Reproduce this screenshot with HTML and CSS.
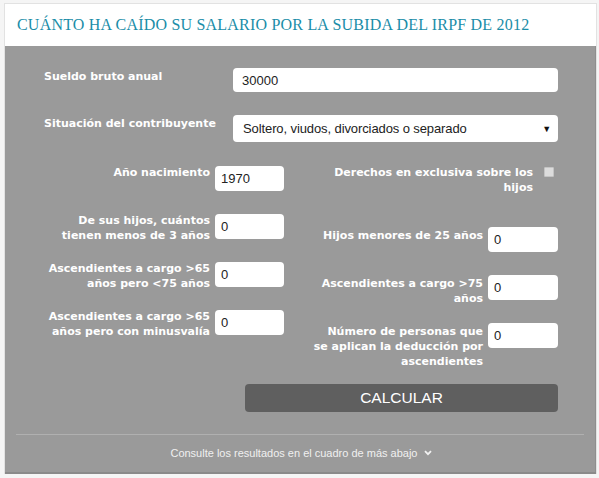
FILE: index.html
```html
<!DOCTYPE html>
<html lang="es">
<head>
<meta charset="utf-8">
<title>Calculadora IRPF 2012</title>
<link rel="stylesheet" href="styles.css">
</head>
<body>
<div class="widget">
  <div class="header">
    <h1 class="title">CUÁNTO HA CAÍDO SU SALARIO POR LA SUBIDA DEL IRPF DE 2012</h1>
  </div>
  <form class="panel">
    <div class="full-row">
      <label class="label full-label">Sueldo bruto anual</label>
      <input class="field field-wide" type="text" value="30000">
    </div>
    <div class="full-row">
      <label class="label full-label">Situación del contribuyente</label>
      <div class="select">
        <span class="select-text">Soltero, viudos, divorciados o separado</span>
        <span class="select-arrow">▼</span>
      </div>
    </div>
    <div class="columns">
      <div class="col col-left">
        <div class="row">
          <label class="label side-label">Año nacimiento</label>
          <input class="field field-small" type="text" value="1970">
        </div>
        <div class="row">
          <label class="label side-label">De sus hijos, cuántos tienen menos de 3 años</label>
          <input class="field field-small" type="text" value="0">
        </div>
        <div class="row">
          <label class="label side-label">Ascendientes a cargo &gt;65 años pero &lt;75 años</label>
          <input class="field field-small" type="text" value="0">
        </div>
        <div class="row">
          <label class="label side-label">Ascendientes a cargo &gt;65 años pero con minusvalía</label>
          <input class="field field-small" type="text" value="0">
        </div>
      </div>
      <div class="col col-right">
        <div class="row row-check">
          <label class="label check-label">Derechos en exclusiva sobre los hijos</label>
          <span class="checkbox"></span>
        </div>
        <div class="row">
          <label class="label side-label right-label">Hijos menores de 25 años</label>
          <input class="field field-right" type="text" value="0">
        </div>
        <div class="row">
          <label class="label side-label right-label">Ascendientes a cargo &gt;75 años</label>
          <input class="field field-right" type="text" value="0">
        </div>
        <div class="row">
          <label class="label side-label right-label">Número de personas que se aplican la deducción por ascendientes</label>
          <input class="field field-right" type="text" value="0">
        </div>
      </div>
    </div>
    <div class="actions">
      <button class="button" type="button">CALCULAR</button>
    </div>
    <div class="divider"></div>
    <p class="note">Consulte los resultados en el cuadro de más abajo
      <svg class="chevron" width="8" height="6" viewBox="0 0 8 6"><path d="M1 1.2 L4 4.2 L7 1.2" fill="none" stroke="#f2f2f2" stroke-width="1.8"/></svg>
    </p>
  </form>
</div>
</body>
</html>
```
FILE: styles.css
```css
html, body {
  margin: 0;
  padding: 0;
  background: #f5f5f5;
}
body {
  font-family: "Liberation Sans", Arial, sans-serif;
}
.widget {
  margin: 3px 2px 0 4px;
  border: 1px solid #e2e2e2;
  border-bottom: none;
}
.header {
  height: 42px;
  background: #ffffff;
  padding-left: 12px;
  display: flex;
  align-items: center;
}
.title {
  margin: 0;
  font-family: "Liberation Serif", "DejaVu Serif", serif;
  font-weight: normal;
  font-size: 16px;
  color: #1a8da8;
  letter-spacing: 0.2px;
}
.panel {
  background: #9a9a9a;
  padding: 22px 38px 0 39px;
  border-bottom: 2px solid #8a8a8a;
  box-shadow: inset -1px 0 0 #8e8e8e;
  margin: 0;
}
.label {
  font-family: "DejaVu Sans", Verdana, sans-serif;
  font-weight: bold;
  color: #ffffff;
  font-size: 11px;
  line-height: 15px;
}
.full-row {
  display: flex;
  justify-content: space-between;
  align-items: flex-start;
  margin-bottom: 23px;
}
.full-label {
  padding-top: 1px;
}
.field {
  border: none;
  border-radius: 4px;
  background: #ffffff;
  font-family: "Liberation Sans", Arial, sans-serif;
  font-size: 13px;
  color: #222;
  outline: none;
  box-sizing: border-box;
  margin: 0;
}
.field-wide {
  width: 325px;
  height: 24px;
  padding: 0 9px;
}
.select {
  width: 325px;
  height: 27px;
  background: #fff;
  border-radius: 4px;
  box-sizing: border-box;
  padding: 0 7px 0 10px;
  display: flex;
  align-items: center;
  justify-content: space-between;
  font-size: 13px;
  letter-spacing: -0.1px;
  color: #222;
}
.select-arrow {
  font-size: 9px;
  color: #111;
}
.columns {
  display: grid;
  grid-template-columns: 240px 1fr;
}
.col {
  display: flex;
  flex-direction: column;
}
.col-left {
  padding-top: 1px;
}
.row {
  display: flex;
  justify-content: flex-end;
  align-items: flex-start;
  gap: 5px;
  height: 48px;
}
.row-check {
  height: 61px;
  gap: 11px;
  padding-right: 4px;
}
.side-label {
  max-width: 170px;
  text-align: right;
  margin-top: -1px;
}
.right-label {
  margin-top: 2px;
  max-width: 173px;
}
.check-label {
  text-align: right;
  max-width: 215px;
}
.checkbox {
  width: 10px;
  height: 10px;
  margin-top: 2px;
  background: #dcdcdc;
  border: 1px solid #c4c4c4;
  border-radius: 1px;
  box-sizing: border-box;
}
.field-small {
  width: 69px;
  height: 25px;
  padding: 0 6px;
}
.field-right {
  width: 70px;
  height: 25px;
  padding: 0 6px;
  margin-top: 1px;
}
.actions {
  display: flex;
  justify-content: flex-end;
  margin-top: 14px;
}
.button {
  width: 313px;
  height: 28px;
  border: none;
  border-radius: 4px;
  background: #5f5f5f;
  color: #ffffff;
  font-family: "Liberation Sans", Arial, sans-serif;
  font-size: 15.5px;
  padding: 0;
}
.divider {
  height: 1px;
  background: #b0b0b0;
  margin: 22px -26px 0 -28px;
}
.note {
  margin: 0;
  padding: 11px 0 12px;
  text-align: center;
  font-size: 11px;
  line-height: 14px;
  color: #f0f0f0;
}
.chevron {
  margin-left: 3px;
  vertical-align: 1px;
}
```
